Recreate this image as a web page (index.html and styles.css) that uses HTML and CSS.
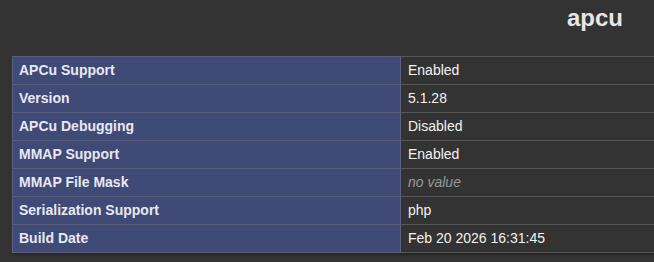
FILE: index.html
```html
<!DOCTYPE html>
<html lang="en">

<head>
    <meta charset="UTF-8">
    <meta name="viewport" content="width=device-width, initial-scale=1.0">
    <title>apcu</title>
    <link rel="stylesheet" href="styles.css">
</head>

<body>
    <div class="page">
        <div class="head">
            <h2>apcu</h2>
        </div>

        <div class="wrap">
            <table>
                <tr><td class="e">APCu Support</td><td class="v">Enabled</td></tr>
                <tr><td class="e">Version</td><td class="v">5.1.28</td></tr>
                <tr><td class="e">APCu Debugging</td><td class="v">Disabled</td></tr>
                <tr><td class="e">MMAP Support</td><td class="v">Enabled</td></tr>
                <tr><td class="e">MMAP File Mask</td><td class="v"><i>no value</i></td></tr>
                <tr><td class="e">Serialization Support</td><td class="v">php</td></tr>
                <tr><td class="e">Build Date</td><td class="v">Feb 20 2026 16:31:45</td></tr>
            </table>
        </div>
    </div>
</body>

</html>
```

FILE: styles.css
```css
* {
    padding: 0;
    margin: 0;
    font-family: "Liberation Sans", Arial, sans-serif;
}

html, body {
    background-color: #333;
    overflow: hidden;
}

.page {
    padding: 4px 0 0 12px;
}

.head {
    display: flex;
    justify-content: flex-end;
    padding-right: 31px;
    margin-bottom: 24px;
}

h2 {
    font-size: 24px;
    line-height: 28px;
    color: #e6e6e6;
}

/* the table runs on past the right edge, so clip it here */
.wrap {
    overflow: hidden;
    padding-bottom: 4px;
}

table {
    border-collapse: collapse;
    width: 760px;
    box-shadow: 1px 2px 3px rgba(0, 0, 0, 0.3);
}

td {
    border: 1px solid #5c6080;
    font-size: 14px;
    line-height: 17px;
    padding: 5px 6px;
    text-align: left;
}

.e {
    width: 375px;
    background-color: #404a77;
    color: #e8e8f2;
    font-weight: bold;
}

.v {
    background-color: #333;
    color: #f2f2f2;
    border-color: #555;
    padding-left: 7px;
}

.v i {
    color: #999;
}
```
